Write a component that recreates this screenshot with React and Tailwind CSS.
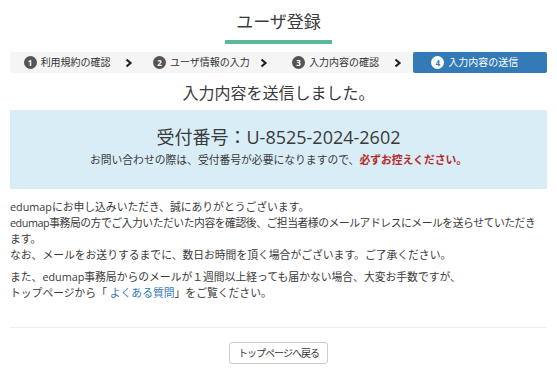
const steps = [
  { no: 1, label: '利用規約の確認' },
  { no: 2, label: 'ユーザ情報の入力' },
  { no: 3, label: '入力内容の確認' },
  { no: 4, label: '入力内容の送信', active: true },
];

const Chevron = () => (
  <svg width="8" height="9" viewBox="0 0 8 9" className="absolute right-[11px] top-1/2 -translate-y-1/2">
    <path d="M1.5 1 L5.5 4.5 L1.5 8" fill="none" stroke="#222" strokeWidth="2.2" />
  </svg>
);

const App = () => {
  return (
    <div
      className="min-h-screen bg-white px-[10px] text-[#3a3a3a]"
      style={{ fontFamily: '"Open Sans", "Noto Sans CJK JP", sans-serif' }}
    >
      <div className="flex flex-col items-center pt-[10px]">
        <h1 className="text-[17px] leading-[24px]">ユーザ登録</h1>
        <div className="mt-[6px] h-[4px] w-[107px] bg-[#5cb893]"></div>
      </div>

      <div className="mt-[8px] grid grid-cols-4 h-[21px] bg-[#f5f5f5] rounded-[2px]">
        {steps.map((s, i) => (
          <div
            key={s.no}
            className={`relative flex items-center justify-center gap-[4px] text-[10px] ${
              s.active ? 'bg-[#337ab7] text-white rounded-[2px] pr-[10px]' : 'text-[#333] pr-[20px]'
            }`}
          >
            <span
              className={`flex h-[13px] w-[13px] items-center justify-center rounded-full text-[8px] font-bold leading-none ${
                s.active ? 'bg-white text-[#337ab7]' : 'bg-[#555] text-white'
              }`}
            >
              {s.no}
            </span>
            <span>{s.label}</span>
            {i < 3 && <Chevron />}
          </div>
        ))}
      </div>

      <h2 className="mt-[7px] text-center text-[16px] leading-[26px]">入力内容を送信しました。</h2>

      <div className="mt-[4px] flex h-[79px] flex-col items-center bg-[#d9edf7] pt-[15px]">
        <p className="text-[18px] leading-[24px]">受付番号：U-8525-2024-2602</p>
        <p className="mt-[3px] text-[10.8px] leading-[16px]">
          お問い合わせの際は、受付番号が必要になりますので、
          <span className="font-bold text-[#b52b27]">必ずお控えください。</span>
        </p>
      </div>

      <div className="mt-[10px] text-[10.8px] leading-[16px]">
        <p>
          edumapにお申し込みいただき、誠にありがとうございます。
          <br />
          <span className="whitespace-nowrap tracking-[-0.45px]">
            edumap事務局の方でご入力いただいた内容を確認後、ご担当者様のメールアドレスにメールを送らせていただき
          </span>
          <br />
          ます。
          <br />
          なお、メールをお送りするまでに、数日お時間を頂く場合がございます。ご了承ください。
        </p>
        <p className="mt-[6px]">
          また、edumap事務局からのメールが１週間以上経っても届かない場合、大変お手数ですが、
          <br />
          トップページから「
          <a href="#" className="text-[#337ab7]"> よくある質問</a>
          」をご覧ください。
        </p>
      </div>

      <hr className="mt-[26px] border-t border-[#eee]" />

      <div className="flex justify-center pt-[14px] pb-[10px]">
        <button className="h-[22px] rounded-[3px] border border-[#ccc] bg-white px-[8px] text-[10px] tracking-[-1px] text-[#333]">
          トップページへ戻る
        </button>
      </div>
    </div>
  );
};

export default App;
